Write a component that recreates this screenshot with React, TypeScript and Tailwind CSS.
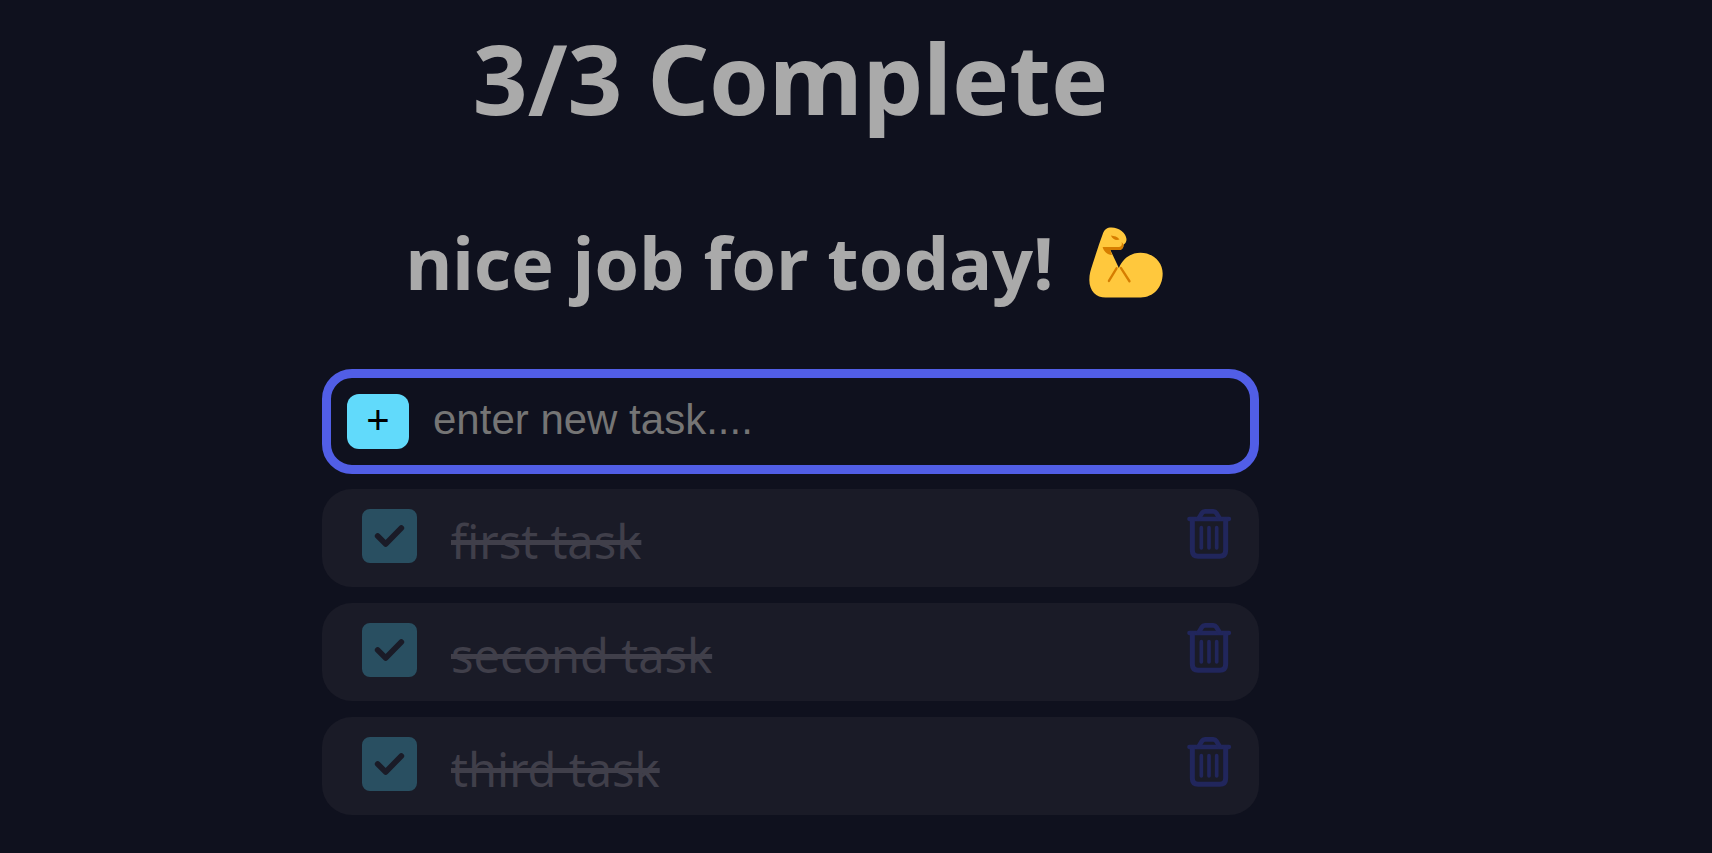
import { useState } from "react";

type Task = { id: number; name: string; done: boolean };

const initialTasks: Task[] = [
  { id: 1, name: "first task", done: true },
  { id: 2, name: "second task", done: true },
  { id: 3, name: "third task", done: true },
];

function FlexedArm() {
  return (
    <svg role="img" aria-label="flexed biceps" viewBox="56 54 223 213" className="h-[71px] w-[74px] shrink-0">
      <path
        fill="#ffc83d"
        d="M124 55C110 55 103 61 98 73C88 100 76 137 67 165C61 184 57 195 57 213C57 246 78 266 106 266H212C250 266 278 236 278 194C278 158 248 131 211 131C181 131 158 149 146 177L120 122H152C160 118 160 112 160 107C167 103 169 98 169 90C168 72 146 55 124 55Z"
      />
      <path fill="#d67d00" d="M122 79C132 80 143 83 148 91C138 95 127 91 122 79ZM154 99C161 105 162 113 156 119C153 123 148 123 142 123H120L125 138C111 137 100 127 97 114H147C153 113 157 108 154 99Z" />
      <path fill="none" stroke="#d67d00" strokeWidth="7" strokeLinecap="round" d="M139 178L116 216M152 177L178 217" />
    </svg>
  );
}

function TrashIcon() {
  return (
    <svg aria-hidden="true" viewBox="108 87 138 150" className="h-[50px] w-[46px]" fill="none" stroke="#21265c" strokeLinecap="round" strokeLinejoin="round">
      <path strokeWidth="13" d="M118 117H237" />
      <path strokeWidth="15" d="M127 119V211Q127 229 145 229H209Q227 229 227 211V119" />
      <path strokeWidth="14" d="M147 114L156 99Q159 94 165 94H190Q196 94 199 99L208 114" />
      <path strokeWidth="11" d="M154 143V204M177 143V204M200 143V204" />
    </svg>
  );
}

export default function App() {
  const [tasks, setTasks] = useState(initialTasks);
  const [draft, setDraft] = useState("");
  const done = tasks.filter((t) => t.done).length;

  const add = () => {
    if (!draft.trim()) return;
    setTasks([...tasks, { id: Date.now(), name: draft, done: false }]);
    setDraft("");
  };

  return (
    <main className="min-h-screen bg-[#0f111e] pr-[131px] pb-9 font-['Noto_Sans','Open_Sans',sans-serif]">
      <div className="mx-auto flex w-full max-w-[937px] flex-col">
        <h1 className="pt-3 text-center text-[96px] leading-[132px] font-bold text-[#aaaaaa]">
          {done}/{tasks.length} Complete
        </h1>
        <h2 className="mt-[68px] flex items-center justify-center gap-9 pr-3 text-[72px] leading-[100px] font-bold whitespace-nowrap text-[#aaaaaa]">
          nice job for today!
          <FlexedArm />
        </h2>
        <form
          className="mt-[57px] flex h-[105px] items-center gap-6 rounded-[30px] border-9 border-[#515ee6] px-4"
          onSubmit={(e) => {
            e.preventDefault();
            add();
          }}
        >
          <button
            type="submit"
            aria-label="Add task"
            className="h-[55px] w-[62px] shrink-0 rounded-xl bg-[#61dafb] pb-1 font-['Liberation_Sans',sans-serif] text-[40px] leading-[50px] text-black"
          >
            +
          </button>
          <input
            type="text"
            aria-label="New task"
            placeholder="enter new task...."
            value={draft}
            onChange={(e) => setDraft(e.target.value)}
            className="min-w-0 flex-1 bg-transparent pb-1 font-['Liberation_Sans',sans-serif] text-[42px] leading-[50px] text-[#aaaaaa] outline-none placeholder:text-[#757575]"
          />
        </form>
        <ul className="mt-[15px] flex flex-col gap-4">
          {tasks.map((task) => (
            <li key={task.id} className="flex h-[98px] items-start rounded-[30px] bg-[#1a1b27] pt-5 pr-[27px] pl-10">
              <span className="relative h-[54px] w-[55px] shrink-0">
                <input
                  id={`task-${task.id}`}
                  type="checkbox"
                  checked={task.done}
                  onChange={() => setTasks(tasks.map((t) => (t.id === task.id ? { ...t, done: !t.done } : t)))}
                  className="block h-full w-full appearance-none rounded-lg border-4 border-[#294f61] checked:bg-[#294f61]"
                />
                {task.done && (
                  <svg aria-hidden="true" viewBox="0 0 165 162" className="pointer-events-none absolute inset-0 h-full w-full">
                    <path d="M47 81L71 105L118 57" fill="none" stroke="#1a1b27" strokeWidth="17" strokeLinecap="round" strokeLinejoin="round" />
                  </svg>
                )}
              </span>
              <label
                htmlFor={`task-${task.id}`}
                className={
                  task.done
                    ? "ml-[34px] flex-1 text-[47px] leading-[64px] text-[#403f4a] line-through decoration-5"
                    : "ml-[34px] flex-1 text-[47px] leading-[64px] text-[#aaaaaa]"
                }
              >
                {task.name}
              </label>
              <button type="button" aria-label={`Delete ${task.name}`} onClick={() => setTasks(tasks.filter((t) => t.id !== task.id))}>
                <TrashIcon />
              </button>
            </li>
          ))}
        </ul>
      </div>
    </main>
  );
}
